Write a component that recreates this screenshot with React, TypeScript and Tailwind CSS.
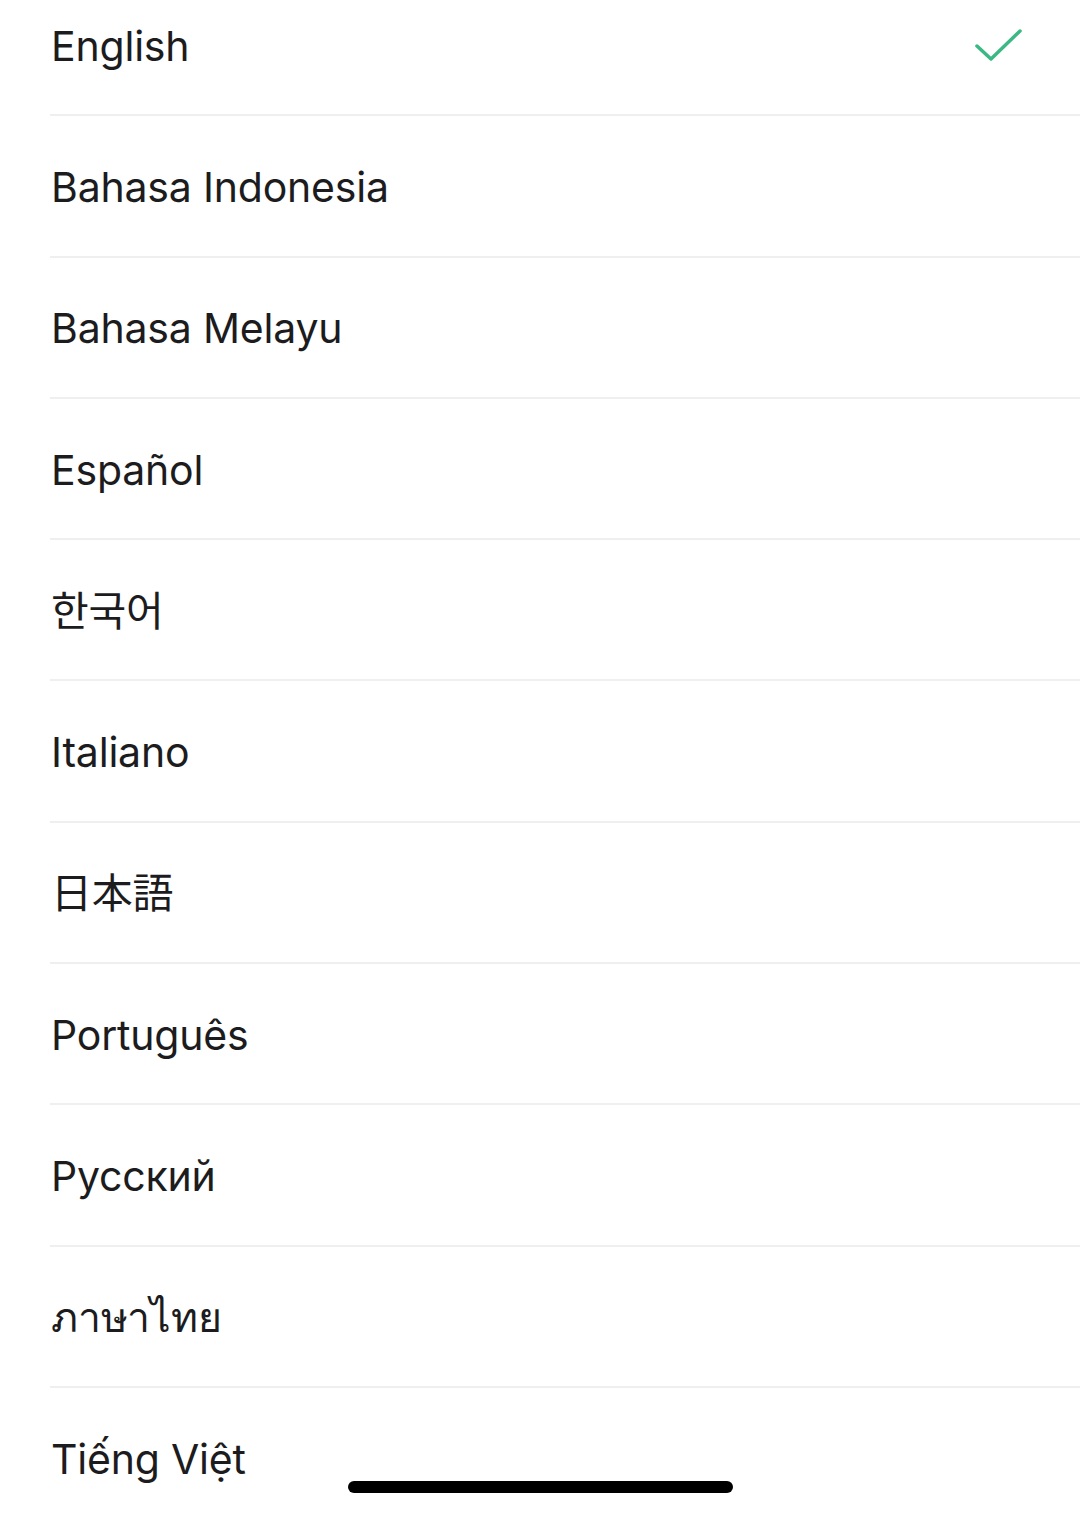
const LANGUAGES = [
  'English',
  'Bahasa Indonesia',
  'Bahasa Melayu',
  'Español',
  '한국어',
  'Italiano',
  '日本語',
  'Português',
  'Русский',
  'ภาษาไทย',
  'Tiếng Việt',
];

const FONT =
  'font-[Inter,"Noto_Sans","Noto_Sans_CJK_KR","Noto_Sans_CJK_JP","DejaVu_Sans",sans-serif]';

export default function App() {
  return (
    <div className={`relative h-[1514px] w-[1080px] overflow-hidden bg-white ${FONT}`}>
      <ul className="-mt-[25px]">
        {LANGUAGES.map((name, i) => (
          <li key={name} className="ml-[50px] flex h-[141.3px] items-center border-b-[2px] border-[#efefef] pl-[1px] pt-[3px]">
            <span className="flex-1 text-[41px] leading-none tracking-[-0.2px] text-[#1c1c1e]">{name}</span>
            {i === 0 && (
              <svg width="50" height="36" viewBox="0 0 50 36" className="mr-[56px]" fill="none">
                <path
                  d="M3 18 L17 31 L46 3"
                  stroke="#3bb883"
                  strokeWidth="3.5"
                  strokeLinecap="round"
                  strokeLinejoin="round"
                />
              </svg>
            )}
          </li>
        ))}
      </ul>

      {/* home indicator */}
      <div className="absolute left-[348px] top-[1481px] h-[12px] w-[385px] rounded-full bg-black" />
    </div>
  );
}
